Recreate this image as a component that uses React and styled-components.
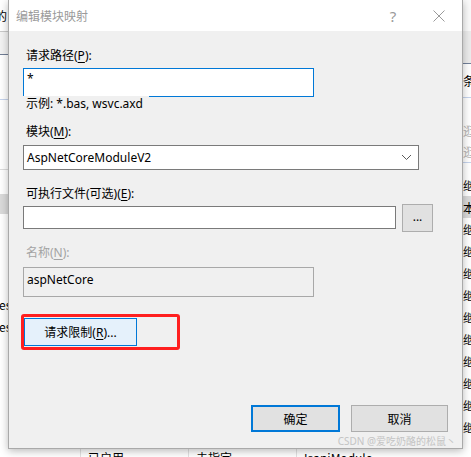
import React from 'react';
import styled, { createGlobalStyle } from 'styled-components';

const GlobalStyle = createGlobalStyle`
  html, body {
    margin: 0;
    padding: 0;
    background: #fff;
  }
  body {
    font-family: "Noto Sans", "Noto Sans CJK SC", sans-serif;
    font-size: 12px;
  }
`;

const Page = styled.div`
  position: relative;
  width: 471px;
  height: 457px;
  overflow: hidden;
  background: #fff;
`;

/* ---------- window behind the dialog ---------- */

const Backdrop = styled.div`
  display: grid;
  grid-template-columns: 8px 1fr 8px;
  grid-template-rows: 448px 1fr;
  height: 100%;
  font-family: "Noto Sans CJK SC", sans-serif;
  color: #000;
`;

const Strip = styled.div`
  display: flex;
  flex-direction: column;
  overflow: hidden;
  white-space: nowrap;
`;

const Seg = styled.div`
  flex: 0 0 ${(p) => p.$h}px;
  display: flex;
  align-items: center;
  overflow: hidden;
  background: ${(p) => p.$bg || 'transparent'};
  border-bottom: ${(p) => (p.$line ? `1px solid ${p.$line}` : 'none')};
  color: ${(p) => p.$color || '#000'};
  margin-left: ${(p) => p.$shift || 0}px;
`;

const BottomRow = styled.div`
  grid-column: 1 / -1;
  display: flex;
  background: #fff;
  border-top: 1px solid #fff;
  overflow: hidden;
`;

const Cell = styled.div`
  flex: 0 0 ${(p) => p.$w}px;
  padding: 1px 0 0 7px;
  border-right: 1px solid #e2e2e2;
  line-height: 16px;
  white-space: nowrap;
  overflow: hidden;
`;

/* ---------- dialog ---------- */

const Dialog = styled.div`
  position: absolute;
  left: 8px;
  top: 0;
  width: 455px;
  height: 449px;
  box-sizing: border-box;
  display: flex;
  flex-direction: column;
  background: #f0f0f0;
  border: 1px solid #a9a9a9;
  border-top: none;
  box-shadow: 0 2px 8px rgba(0, 0, 0, 0.28);
`;

const TitleBar = styled.div`
  flex: 0 0 31px;
  display: flex;
  align-items: center;
  padding-left: 7px;
  background: #fff;
  font-family: "Noto Sans CJK SC", sans-serif;
  color: #9a9a9a;
`;

const Title = styled.div`
  flex: 1;
  font-size: 12px;
`;

const TitleButton = styled.div`
  width: 46px;
  height: 31px;
  display: flex;
  align-items: center;
  justify-content: center;
  color: #9a9a9a;
  font-family: "Noto Sans", sans-serif;
  font-size: 15px;
`;

const Body = styled.div`
  flex: 1;
  display: flex;
  flex-direction: column;
  align-items: flex-start;
  padding: 17px 14px 0 14px;
`;

const Label = styled.div`
  padding-left: 3px;
  margin-top: ${(p) => p.$mt || 0}px;
  line-height: 16px;
  color: ${(p) => (p.$disabled ? '#a3a3a3' : '#000')};

  u {
    text-underline-offset: 2px;
  }
`;

const TextBox = styled.div`
  box-sizing: border-box;
  width: ${(p) => p.$w}px;
  height: ${(p) => p.$h}px;
  margin-top: ${(p) => p.$mt || 0}px;
  padding: ${(p) => (p.$tall ? '4px 3px' : '2px 3px')};
  background: ${(p) => (p.$disabled ? '#f0f0f0' : '#fff')};
  border: 1px solid ${(p) => p.$border || '#7a7a7a'};
  line-height: 16px;
`;

const Hint = styled.div`
  position: relative;
  margin-top: -1px;
  padding: 0 6px 0 3px;
  line-height: 16px;
  background: #f0f0f0;
`;

const Select = styled.div`
  box-sizing: border-box;
  width: 396px;
  height: 25px;
  margin-top: 5px;
  display: flex;
  align-items: center;
  padding: 0 6px 0 3px;
  background: #fff;
  border: 1px solid #7a7a7a;

  span {
    flex: 1;
  }
`;

const FileRow = styled.div`
  display: flex;
  align-items: flex-start;
  margin-top: 3px;
`;

const Button = styled.button`
  box-sizing: border-box;
  width: ${(p) => p.$w}px;
  height: ${(p) => p.$h || 28}px;
  margin: 0;
  padding: 0;
  font-family: "Noto Sans", "Noto Sans CJK SC", sans-serif;
  font-size: 12px;
  color: #000;
  background: ${(p) => (p.$focus ? '#e5f1fb' : '#e1e1e1')};
  border: ${(p) => (p.$default ? '2px solid #0078d7' : p.$focus ? '1px solid #0078d7' : '1px solid #adadad')};
  display: flex;
  align-items: center;
  justify-content: center;

  u {
    text-underline-offset: 2px;
  }
`;

const BrowseButton = styled(Button)`
  margin-left: 6px;
  margin-top: -1px;
  padding-bottom: 4px;
`;

const Annotation = styled.div`
  margin: 17px 0 0 -2px;
  padding: 1px 40px 1px 0;
  border: 3px solid #ff1f1f;
  border-radius: 3px;
`;

const Footer = styled.div`
  margin-top: auto;
  align-self: stretch;
  display: flex;
  justify-content: flex-end;
  gap: 11px;
  padding: 0 0 16px 0;
`;

const Watermark = styled.div`
  position: absolute;
  right: 15px;
  top: 434px;
  font-family: "Noto Sans", "Noto Sans CJK SC", sans-serif;
  font-size: 10px;
  line-height: 14px;
  color: #c4c4c4;
`;

const Chevron = () => (
  <svg width="11" height="7" viewBox="0 0 11 7" fill="none">
    <path d="M1 1l4.5 4.5L10 1" stroke="#5a5a5a" strokeWidth="1" />
  </svg>
);

const CloseIcon = () => (
  <svg width="12" height="12" viewBox="0 0 12 12" fill="none">
    <path d="M0.5 0.5l11 11M11.5 0.5l-11 11" stroke="#9a9a9a" strokeWidth="1" />
  </svg>
);

const rightRows = ['继', '本', '继', '继', '继', '继', '继', '继', '继', '继', '继', '继'];

export default function App() {
  return (
    <Page>
      <GlobalStyle />
      <Backdrop>
        <Strip>
          <Seg $h={31} $line="#c9c9c9" $shift={-5}>的</Seg>
          <Seg $h={22} $bg="#f3f3f3" $line="#707d95" />
          <Seg $h={44} $line="#c5d3ec" />
          <Seg $h={69} $line="#dcdcdc" />
          <Seg $h={24} />
          <Seg $h={20} $bg="#dadada" />
          <Seg $h={79} />
          <Seg $h={22} $shift={-1}>es</Seg>
          <Seg $h={22} $shift={-1}>es</Seg>
        </Strip>
        <div />
        <Strip>
          <Seg $h={31} $bg="#fafafa" />
          <Seg $h={32} $bg="#ececec" $line="#72809a" />
          <Seg $h={33} $line="#c5d3ec">条</Seg>
          <Seg $h={22} />
          <Seg $h={21} $color="#b4b4b4">逛</Seg>
          <Seg $h={21} $color="#b4b4b4" $line="#c5d3ec">逛</Seg>
          <Seg $h={11} />
          {rightRows.map((ch, i) => (
            <Seg key={i} $h={22} $bg={ch === '本' ? '#dadada' : undefined}>
              {ch}
            </Seg>
          ))}
        </Strip>
        <BottomRow>
          <Cell $w={73} />
          <Cell $w={100}>已启用</Cell>
          <Cell $w={100}>未指定</Cell>
          <Cell $w={190}>IsapiModule</Cell>
          <Cell $w={20}>继承</Cell>
        </BottomRow>
      </Backdrop>

      <Dialog>
        <TitleBar>
          <Title>编辑模块映射</Title>
          <TitleButton>?</TitleButton>
          <TitleButton>
            <CloseIcon />
          </TitleButton>
        </TitleBar>

        <Body>
          <Label>
            请求路径(<u>P</u>):
          </Label>
          <TextBox $w={291} $h={29} $mt={4} $border="#0078d7">
            *
          </TextBox>
          <Hint>示例: *.bas, wsvc.axd</Hint>

          <Label $mt={12}>
            模块(<u>M</u>):
          </Label>
          <Select>
            <span>AspNetCoreModuleV2</span>
            <Chevron />
          </Select>

          <Label $mt={16}>
            可执行文件(可选)(<u>E</u>):
          </Label>
          <FileRow>
            <TextBox $w={373} $h={23} $mt={1} />
            <BrowseButton $w={31} $h={28}>...</BrowseButton>
          </FileRow>

          <Label $mt={13} $disabled>
            名称(<u>N</u>):
          </Label>
          <TextBox $w={291} $h={30} $mt={6} $border="#a8a8a8" $disabled $tall>
            aspNetCore
          </TextBox>

          <Annotation>
            <Button $w={113} $h={28} $focus>
              请求限制(<u>R</u>)...
            </Button>
          </Annotation>

          <Footer>
            <Button $w={89} $h={27} $default>
              确定
            </Button>
            <Button $w={97} $h={27}>
              取消
            </Button>
          </Footer>
        </Body>
      </Dialog>

      <Watermark>CSDN @爱吃奶酪的松鼠丶</Watermark>
    </Page>
  );
}
